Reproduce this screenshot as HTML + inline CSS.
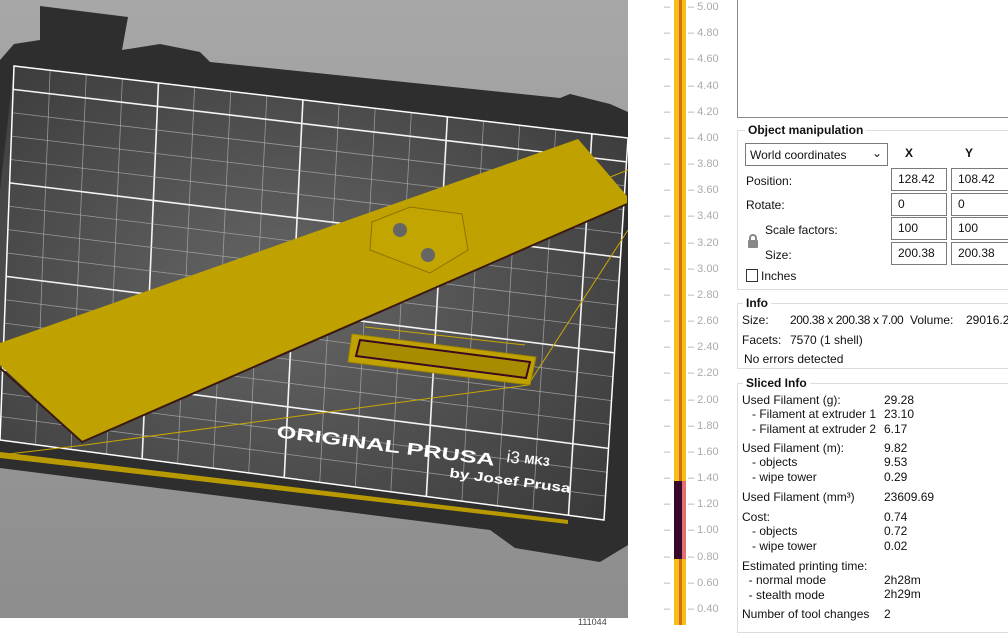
<!DOCTYPE html>
<html><head><meta charset="utf-8"><style>
*{margin:0;padding:0;box-sizing:border-box}
body{width:1008px;height:625px;overflow:hidden;background:#fff;font-family:"Liberation Sans",sans-serif;font-size:12px;color:#111;position:relative}
.a{position:absolute;white-space:nowrap}
.in{position:absolute;border:1px solid #7a7a7a;background:#fff;padding:1px 0 0 6px;font-size:12px;height:23px;line-height:18px}
.gb{position:absolute;border:1px solid #dcdcdc}
.t{position:absolute;font-weight:bold;background:#fff;padding:0 3px}
.tk{position:absolute;font-size:11px;color:#aaa}
</style></head><body>
<svg class="a" style="left:0;top:0" width="628" height="618" viewBox="0 0 628 618">
<defs>
<linearGradient id="bg" x1="0" y1="0" x2="0" y2="1"><stop offset="0" stop-color="#a7a7a7"/><stop offset="1" stop-color="#8d8d8d"/></linearGradient>
<radialGradient id="sh" cx="0.45" cy="0.5" r="0.7"><stop offset="0" stop-color="#666"/><stop offset="1" stop-color="#3a3a3a"/></radialGradient>
</defs>
<rect width="628" height="618" fill="url(#bg)"/>
<polygon points="14,44 40,40 40,6 128,17 122,50 160,44 200,52 210,62 560,98 570,94 610,104 628,112 628,545 600,562 515,548 490,530 0,468 0,60" fill="#2e2e2e"/>
<polygon points="14,66 628,138 604,520 0,440 0,190" fill="url(#sh)"/>
<g id="grid" fill="none"></g>
<polygon points="14,66 628,138 604,520 0,440" fill="none" stroke="#fff" stroke-width="1.5"/>
<polyline points="0,352 80,330 590,185 628,170" fill="none" stroke="#c9a800" stroke-width="1"/>
<polyline points="0,455 85,445 528,385 628,230" fill="none" stroke="#c9a800" stroke-width="1"/>
<polygon points="0,452 568,520 568,524 0,458" fill="#b89a00"/>
<polygon points="578,139 627,196 627,204 82,442 0,365 0,343" fill="#bfa200"/>
<polyline points="627,204 82,442 0,368" fill="none" stroke="#3a1a10" stroke-width="2"/>
<polygon points="372,222 410,207 462,214 468,250 430,273 370,250" fill="#c2a500" stroke="#8a7400" stroke-width="1"/>
<circle cx="400" cy="230" r="7" fill="#666"/><circle cx="428" cy="255" r="7" fill="#666"/>
<polygon points="352,334 536,357 530,385 348,362" fill="#bfa200" stroke="#a08600"/>
<polygon points="360,340 530,362 526,378 356,356" fill="#a88c00" stroke="#3a0a20" stroke-width="2"/>
<polyline points="365,327 525,345" stroke="#c9a800" fill="none"/>
<text x="276" y="437" transform="rotate(7.5 276 437)" fill="#fff" font-size="17" font-family="Liberation Sans" font-weight="bold" textLength="220" lengthAdjust="spacingAndGlyphs">ORIGINAL PRUSA</text>
<text x="506" y="462" transform="rotate(7.5 506 462)" fill="#fff" font-size="17" font-family="Liberation Sans">i3</text>
<text x="524" y="463" transform="rotate(7.5 524 463)" fill="#fff" font-size="12" font-family="Liberation Sans" font-weight="bold">MK3</text>
<text x="449" y="477" transform="rotate(7.5 449 477)" fill="#fff" font-size="13" font-family="Liberation Sans" font-weight="bold" textLength="122" lengthAdjust="spacingAndGlyphs">by Josef Prusa</text>
</svg>
<div class="a" style="left:0;top:618px;width:628px;height:7px;background:#fff"></div>
<div class="a" style="left:578px;top:617px;font-size:9px;color:#444">111044</div>
<div class="a" style="left:674px;top:0;width:12px;height:625px;background:#f2c018"></div>
<div class="a" style="left:679px;top:0;width:3px;height:625px;background:#e06a10"></div>
<div class="a" style="left:674px;top:481px;width:12px;height:78px;background:#38082a"></div>
<div class="a" style="left:682px;top:481px;width:4px;height:78px;background:#e07070"></div>
<div id="ruler"></div>
<div class="a" style="left:737px;top:0;width:271px;height:118px;border:1px solid #888;border-top:none;border-right:none"></div>
<div class="gb" style="left:737px;top:130px;width:280px;height:160px"></div>
<div class="t" style="left:745px;top:123px">Object manipulation</div>
<div class="a" style="left:745px;top:143px;width:143px;height:23px;border:1px solid #7a7a7a;padding:4px 0 0 4px">World coordinates<span style="position:absolute;right:5px;top:2px">&#8964;</span></div>
<div class="a" style="left:905px;top:146px;font-weight:bold">X</div>
<div class="a" style="left:965px;top:146px;font-weight:bold">Y</div>
<div class="a" style="left:746px;top:174px">Position:</div>
<div class="a" style="left:746px;top:198px">Rotate:</div>
<div class="a" style="left:765px;top:223px">Scale factors:</div>
<div class="a" style="left:765px;top:248px">Size:</div>
<div class="a" style="left:748px;top:240px;width:10px;height:8px;background:#888;border-radius:1px"></div>
<div class="a" style="left:749px;top:234px;width:8px;height:8px;border:2px solid #888;border-bottom:none;border-radius:4px 4px 0 0"></div>
<div class="in" style="left:891px;top:168px;width:56px">128.42</div><div class="in" style="left:951px;top:168px;width:60px">108.42</div>
<div class="in" style="left:891px;top:193px;width:56px">0</div><div class="in" style="left:951px;top:193px;width:60px">0</div>
<div class="in" style="left:891px;top:217px;width:56px">100</div><div class="in" style="left:951px;top:217px;width:60px">100</div>
<div class="in" style="left:891px;top:242px;width:56px">200.38</div><div class="in" style="left:951px;top:242px;width:60px">200.38</div>
<div class="a" style="left:746px;top:269px;width:12px;height:13px;border:1px solid #333"></div>
<div class="a" style="left:761px;top:269px">Inches</div>
<div class="gb" style="left:737px;top:303px;width:280px;height:66px"></div>
<div class="t" style="left:743px;top:296px">Info</div>
<div class="a" style="left:742px;top:313px">Size:</div><div class="a" style="left:790px;top:313px;letter-spacing:-0.4px">200.38 x 200.38 x 7.00</div><div class="a" style="left:910px;top:313px">Volume:</div><div class="a" style="left:966px;top:313px">29016.26</div>
<div class="a" style="left:742px;top:333px">Facets:</div><div class="a" style="left:790px;top:333px">7570 (1 shell)</div>
<div class="a" style="left:744px;top:352px">No errors detected</div>
<div class="gb" style="left:737px;top:383px;width:280px;height:250px"></div>
<div class="t" style="left:743px;top:376px">Sliced Info</div>
<div class="a" style="left:742px;top:393px;line-height:14.3px">Used Filament (g):<br>&nbsp;&nbsp;&nbsp;- Filament at extruder 1<br>&nbsp;&nbsp;&nbsp;- Filament at extruder 2</div>
<div class="a" style="left:884px;top:393px;line-height:14.3px">29.28<br>23.10<br>6.17</div>
<div class="a" style="left:742px;top:441px;line-height:14.3px">Used Filament (m):<br>&nbsp;&nbsp;&nbsp;- objects<br>&nbsp;&nbsp;&nbsp;- wipe tower</div>
<div class="a" style="left:884px;top:441px;line-height:14.3px">9.82<br>9.53<br>0.29</div>
<div class="a" style="left:742px;top:490px">Used Filament (mm³)</div><div class="a" style="left:884px;top:490px">23609.69</div>
<div class="a" style="left:742px;top:510px;line-height:14.3px">Cost:<br>&nbsp;&nbsp;&nbsp;- objects<br>&nbsp;&nbsp;&nbsp;- wipe tower</div>
<div class="a" style="left:884px;top:510px;line-height:14.3px">0.74<br>0.72<br>0.02</div>
<div class="a" style="left:742px;top:559px;line-height:14.3px">Estimated printing time:<br>&nbsp;&nbsp;- normal mode<br>&nbsp;&nbsp;- stealth mode</div>
<div class="a" style="left:884px;top:573px;line-height:14.3px">2h28m<br>2h29m</div>
<div class="a" style="left:742px;top:607px">Number of tool changes</div><div class="a" style="left:884px;top:607px">2</div>
<script>
var g=document.getElementById('grid'),s='';
var TL=[14,66],TR=[628,138],BR=[604,520],BL=[0,440];
function P(u,v){var tx=TL[0]+(TR[0]-TL[0])*u,ty=TL[1]+(TR[1]-TL[1])*u,bx=BL[0]+(BR[0]-BL[0])*u,by=BL[1]+(BR[1]-BL[1])*u;return [tx+(bx-tx)*v,ty+(by-ty)*v];}
function L(a,b,m){return '<line x1="'+a[0]+'" y1="'+a[1]+'" x2="'+b[0]+'" y2="'+b[1]+'" stroke="'+(m?'#f4f4f4':'#b8b8b8')+'" stroke-opacity="'+(m?1:0.7)+'" stroke-width="'+(m?1.6:0.8)+'"/>';}
for(var i=1;i<17;i++){var u=i/17;s+=L(P(u,0),P(u,1),i%4==0);}
for(var j=1;j<16;j++){var v=j/16;s+=L(P(0,v),P(1,v),j%4==1);}
g.innerHTML=s;
var r='';
for(var k=0;k<=23;k++){var y=8+k*26.17,val=(5-k*0.2).toFixed(2);
r+='<div class="tk" style="left:664px;top:'+(y-7)+'px">–</div><div class="tk" style="left:688px;top:'+(y-7)+'px">– '+val+'</div>';}
document.getElementById('ruler').innerHTML=r;
</script>
</body></html>
